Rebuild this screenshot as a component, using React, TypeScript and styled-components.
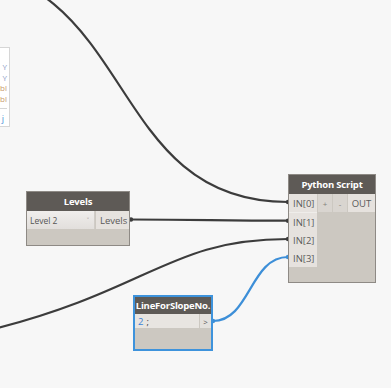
import React from "react";
import styled, { createGlobalStyle } from "styled-components";

const Global = createGlobalStyle`
  html, body { margin: 0; padding: 0; background: #f7f7f7; }
  body { font-family: "Open Sans", "Noto Sans", "DejaVu Sans", sans-serif; }
`;

const Canvas = styled.div`
  position: relative;
  width: 391px;
  height: 388px;
  overflow: hidden;
  background: #f7f7f7;
`;

const Wires = styled.svg`
  position: absolute;
  left: 0;
  top: 0;
  width: 391px;
  height: 388px;
`;

const Node = styled.div<{ $x: number; $y: number; $w: number; $h: number; $selected?: boolean }>`
  position: absolute;
  left: ${(p) => p.$x}px;
  top: ${(p) => p.$y}px;
  width: ${(p) => p.$w}px;
  height: ${(p) => p.$h}px;
  box-sizing: border-box;
  background: #ccc8c1;
  border: ${(p) => (p.$selected ? "2px solid #3e93dc" : "1px solid #8e8a85")};
  display: flex;
  flex-direction: column;
`;

const Header = styled.div<{ $h: number }>`
  height: ${(p) => p.$h}px;
  background: #5e5a56;
  color: #fff;
  font-weight: 700;
  font-size: 9.5px;
  letter-spacing: -0.2px;
  display: flex;
  align-items: center;
  justify-content: center;
  white-space: nowrap;
  flex-shrink: 0;
`;

const Row = styled.div<{ $h: number }>`
  display: flex;
  height: ${(p) => p.$h}px;
  flex-shrink: 0;
`;

const Port = styled.div<{ $w: number; $h?: number }>`
  width: ${(p) => p.$w}px;
  ${(p) => (p.$h ? `height: ${p.$h}px;` : "")}
  background: #e6e2de;
  color: #5a5a5a;
  font-size: 9.5px;
  display: flex;
  align-items: center;
  padding-left: 4px;
  box-sizing: border-box;
  flex-shrink: 0;
`;

const SmallBtn = styled.div`
  width: 14px;
  margin-left: 1px;
  background: #d9d5d0;
  color: #85817c;
  font-size: 8px;
  display: flex;
  align-items: center;
  justify-content: center;
`;

const OutPort = styled.div<{ $left?: boolean }>`
  flex: 1;
  margin-left: 1px;
  background: #e6e2de;
  color: #5a5a5a;
  font-size: 9.5px;
  display: flex;
  align-items: center;
  justify-content: ${(p) => (p.$left ? "flex-start" : "center")};
  padding-left: ${(p) => (p.$left ? "4px" : "0")};
`;

const InputStack = styled.div`
  width: 28px;
  display: flex;
  flex-direction: column;
  border-top: 1px solid #efedea;
`;

const Dropdown = styled.div`
  width: 68px;
  background: linear-gradient(#f0eeec, #e2dfdc);
  color: #555;
  font-size: 8.5px;
  display: flex;
  align-items: center;
  justify-content: space-between;
  padding: 0 5px 0 3px;
  box-sizing: border-box;
  border-right: 1px solid #d0ccc7;
`;

const Chevron = styled.span`
  font-size: 7px;
  color: #777;
`;

const CodeInput = styled.div`
  width: 64px;
  background: #e8e5e1;
  font-size: 9.5px;
  color: #444;
  display: flex;
  align-items: center;
  padding-left: 3px;
  box-sizing: border-box;
`;

const Num = styled.span`
  color: #3b82d6;
  margin-right: 3px;
`;

const Arrow = styled.div`
  flex: 1;
  margin-left: 1px;
  background: #e4e1dd;
  color: #555;
  font-size: 8px;
  display: flex;
  align-items: center;
  justify-content: center;
`;

const SidePanel = styled.div`
  position: absolute;
  left: -40px;
  top: 47px;
  width: 50px;
  height: 80px;
  box-sizing: border-box;
  background: #fff;
  border: 1px solid #d6d6d6;
  display: flex;
  flex-direction: column;
  align-items: flex-end;
  font-size: 8px;
  padding: 14px 2px 0 0;
`;

const SideLine = styled.div<{ $c: string }>`
  color: ${(p) => p.$c};
  line-height: 10.5px;
  height: 10.5px;
`;

const SideFoot = styled.div`
  margin-top: 4px;
  width: 100%;
  border-top: 1px solid #d6d6d6;
  text-align: right;
  color: #4a8fd8;
  font-size: 9px;
  padding-top: 3px;
  padding-right: 3px;
  box-sizing: border-box;
`;

export default function App() {
  return (
    <>
      <Global />
      <Canvas>
        <SidePanel>
          <SideLine $c="#8b9cc6">Y</SideLine>
          <SideLine $c="#8b9cc6">Y</SideLine>
          <SideLine $c="#c79a6a">ubl</SideLine>
          <SideLine $c="#c79a6a">ubl</SideLine>
          <SideFoot>j</SideFoot>
        </SidePanel>

        <Wires viewBox="0 0 391 388">
          <g fill="none" strokeWidth="2.2">
            <path d="M -60 -34 C 140 -34, 100 202, 288 202" stroke="#3c3c3c" />
            <path d="M 131 219.5 C 200 219.5, 220 220.7, 288 220.7" stroke="#3c3c3c" />
            <path d="M -10 330 C 150 290, 170 239, 288 239" stroke="#3c3c3c" />
            <path d="M 213 321 C 250 321, 250 257, 288 257" stroke="#3d8fd8" />
          </g>
          <g fill="#3c3c3c">
            <circle cx="288" cy="202" r="2.2" />
            <circle cx="288" cy="220.7" r="2.2" />
            <circle cx="288" cy="239" r="2.2" />
            <circle cx="131" cy="219.5" r="2.2" />
          </g>
          <circle cx="288" cy="257" r="2.2" fill="#3d8fd8" />
          <circle cx="213" cy="321" r="2.2" fill="#3d8fd8" />
        </Wires>

        <Node $x={288} $y={174} $w={88} $h={109}>
          <Header $h={19}>Python Script</Header>
          <Row $h={18}>
            <Port $w={28}>IN[0]</Port>
            <SmallBtn>+</SmallBtn>
            <SmallBtn>-</SmallBtn>
            <OutPort>OUT</OutPort>
          </Row>
          <InputStack>
            <Port $w={28} $h={18}>IN[1]</Port>
            <Port $w={28} $h={18}>IN[2]</Port>
            <Port $w={28} $h={18}>IN[3]</Port>
          </InputStack>
        </Node>

        <Node $x={26} $y={191} $w={104} $h={55}>
          <Header $h={19}>Levels</Header>
          <Row $h={18}>
            <Dropdown>
              Level 2<Chevron>˅</Chevron>
            </Dropdown>
            <OutPort $left>Levels</OutPort>
          </Row>
        </Node>

        <Node $x={133} $y={295} $w={80} $h={56} $selected>
          <Header $h={17}>LineForSlopeNo.</Header>
          <Row $h={14}>
            <CodeInput>
              <Num>2</Num>;
            </CodeInput>
            <Arrow>&gt;</Arrow>
          </Row>
        </Node>
      </Canvas>
    </>
  );
}
